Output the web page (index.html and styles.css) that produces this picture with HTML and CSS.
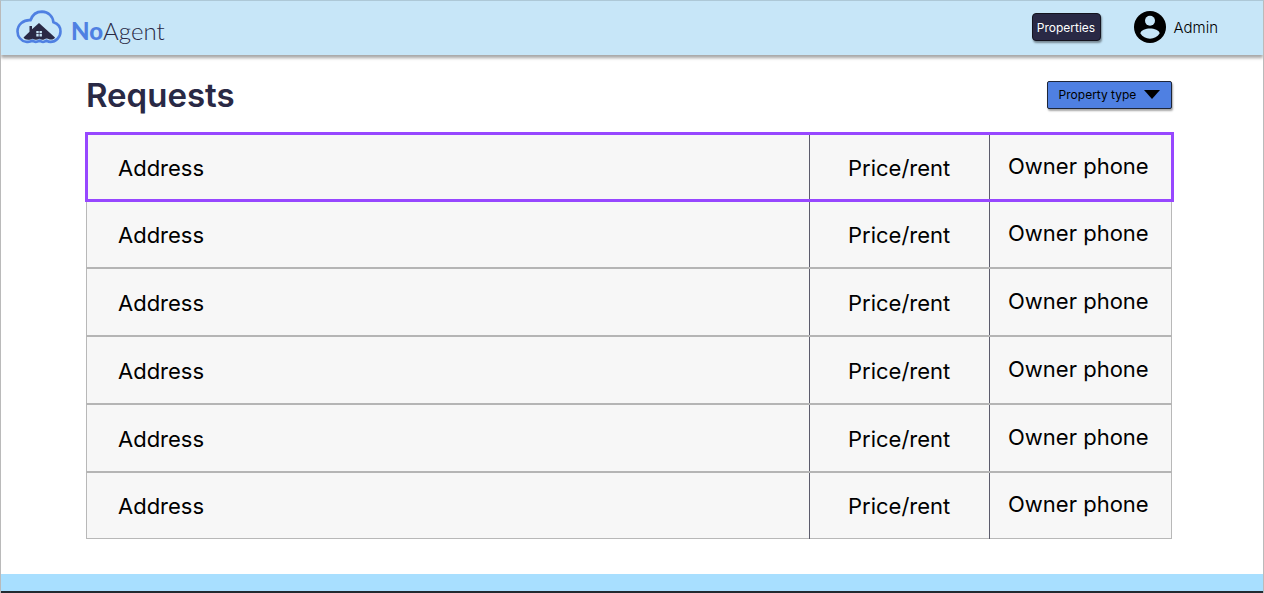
FILE: index.html
```html
<!DOCTYPE html>
<html lang="en">
<head>
<meta charset="utf-8">
<title>NoAgent – Requests</title>
<link rel="stylesheet" href="styles.css">
</head>
<body>
<header class="topbar">
  <a class="brand" href="#">
    <svg class="brand-mark" viewBox="0 0 46 34" aria-hidden="true">
      <path d="M10 31.700 C5 31 1.500 26.500 1.500 21.500 C1.500 14.500 7.500 9.700 14.500 10.200 C16.500 4.500 21 1.600 26 1.600 C32.500 1.800 37 6.500 37.400 12.300 C41.500 13.500 44.500 17 44.500 21.500 C44.500 27 40 31.900 34.500 31.900 C32.800 31.900 31.600 31.300 30.500 30.600 C28.500 32.200 25.500 32.200 23.500 30.600 C21 32.200 18.500 32.200 16.500 30.600 C14.500 31.800 12.500 32.200 10 31.700 Z" fill="none" stroke="#4f80e2" stroke-width="2.600" stroke-linejoin="round"/>
      <path d="M7.500 27.500 L13.500 21.800 V16 H16 V19.300 L23 13 L39 27.500 C38 29.600 35.500 30 33 29.300 C31.500 28.300 30 28.300 28 29.500 C26.500 30 25 29.700 23.500 28.700 C21 30 19 30 16.500 28.700 C14 30 9 30.300 7.500 27.500 Z" fill="#292945"/>
      <path d="M20.300 21 H22.700 V23.300 H20.300 Z M23.500 21 H25.900 V23.300 H23.500 Z M20.300 24.100 H22.700 V26.400 H20.300 Z M23.500 24.100 H25.900 V26.400 H23.500 Z" fill="#c7e6f8"/>
    </svg>
    <span class="brand-name"><b>No</b>Agent</span>
  </a>
  <nav class="actions">
    <button class="properties" type="button">Properties</button>
    <a class="account" href="#">
      <svg class="avatar" viewBox="0 0 32 32" aria-hidden="true">
        <circle cx="16" cy="16" r="16" fill="#000"/>
        <circle cx="16" cy="9.700" r="5" fill="#c7e6f8"/>
        <path d="M6.400 22.500 C6.500 19.300 12 17.600 16 17.600 C20 17.600 25.500 19.300 25.600 22.500 C23.500 25.800 20 27.700 16 27.700 C12 27.700 8.500 25.800 6.400 22.500 Z" fill="#c7e6f8"/>
      </svg>
      <span>Admin</span>
    </a>
  </nav>
</header>
<main class="content">
  <div class="heading">
    <h1>Requests</h1>
    <button class="filter" type="button">Property type
      <svg class="caret" viewBox="0 0 16 9" aria-hidden="true"><path d="M0 0 H16 L8 9 Z"/></svg>
    </button>
  </div>
  <table class="requests">
    <colgroup><col class="col-address"><col class="col-price"><col class="col-phone"></colgroup>
    <tbody>
      <tr class="selected"><td class="address">Address</td><td class="price">Price/rent</td><td class="phone">Owner phone</td></tr>
      <tr><td class="address">Address</td><td class="price">Price/rent</td><td class="phone">Owner phone</td></tr>
      <tr><td class="address">Address</td><td class="price">Price/rent</td><td class="phone">Owner phone</td></tr>
      <tr><td class="address">Address</td><td class="price">Price/rent</td><td class="phone">Owner phone</td></tr>
      <tr><td class="address">Address</td><td class="price">Price/rent</td><td class="phone">Owner phone</td></tr>
      <tr><td class="address">Address</td><td class="price">Price/rent</td><td class="phone">Owner phone</td></tr>
    </tbody>
  </table>
</main>
<footer class="footer"></footer>
</body>
</html>
```
FILE: styles.css
```css
* { box-sizing: border-box; }

body {
  margin: 0;
  min-height: 100vh;
  display: flex;
  flex-direction: column;
  background: #fff;
  border: 1px solid #bababa;
  border-top-color: #adc8d7;
  border-bottom: 0;
  color: #000;
  font-family: Inter, "Liberation Sans", sans-serif;
}

a { color: inherit; text-decoration: none; }

.topbar {
  display: flex;
  justify-content: space-between;
  align-items: center;
  height: 54px;
  padding: 0 45px 2px 15px;
  background: #c7e6f8;
  box-shadow: 0 3px 3px rgba(0, 0, 0, 0.35);
}

.brand { display: flex; align-items: center; gap: 9px; }
.brand-mark { width: 46px; height: 34px; }

.brand-name {
  padding-top: 8px;
  color: #292945;
  font-family: Lato, sans-serif;
  font-size: 24px;
  font-weight: 300;
  line-height: 28px;
}

.brand-name b { color: #4f80e2; font-weight: 900; }

.actions { display: flex; align-items: center; gap: 33px; }

button { font-family: inherit; color: inherit; cursor: pointer; }

.properties {
  width: 69px;
  height: 28px;
  padding: 0;
  background: #292945;
  border: 1px solid #14141f;
  border-radius: 4px;
  box-shadow: 1px 2px 2px rgba(0, 0, 0, 0.4);
  color: #fff;
  font-size: 12px;
}

.account { display: flex; align-items: center; gap: 8px; font-size: 15px; font-weight: 300; }
.avatar { width: 32px; height: 32px; }

.content { flex: 1; padding: 16px 91px 34px 85px; }

.heading {
  display: flex;
  justify-content: space-between;
  align-items: center;
  height: 48px;
  margin-bottom: 14px;
}

h1 { margin: 0; color: #292945; font-size: 33px; font-weight: 600; }

.filter {
  display: flex;
  align-items: center;
  justify-content: center;
  gap: 8px;
  width: 125px;
  height: 28px;
  padding: 0 0 1px;
  background: #4f80e2;
  border: 1px solid #1e2638;
  border-radius: 2px;
  box-shadow: 1px 2px 2px rgba(0, 0, 0, 0.35);
  font-size: 12px;
}

.caret { width: 16px; height: 9px; }

.requests {
  width: 100%;
  height: 406px;
  table-layout: fixed;
  border-collapse: collapse;
  border: 1px solid #b8b8b8;
  background: #f7f7f7;
  font-size: 22px;
}

.col-address { width: 66.600%; }
.col-price { width: 16.600%; }
.col-phone { width: 16.800%; }

.requests td {
  padding: 2px 0 0;
  border-top: 2px solid #b5b5b5;
  border-left: 1px solid #5c5c6c;
}

.requests .address { padding-left: 31px; border-left-color: #b8b8b8; }
.requests .price { text-align: center; }
.requests .phone { padding: 0 4px 2px 0; text-align: center; }

.requests .selected td { border-top-width: 1px; }
.selected { outline: 3px solid #9747ff; outline-offset: -1px; }

.footer { height: 19px; background: #a8dfff; border-bottom: 2px solid #222a30; }
```
